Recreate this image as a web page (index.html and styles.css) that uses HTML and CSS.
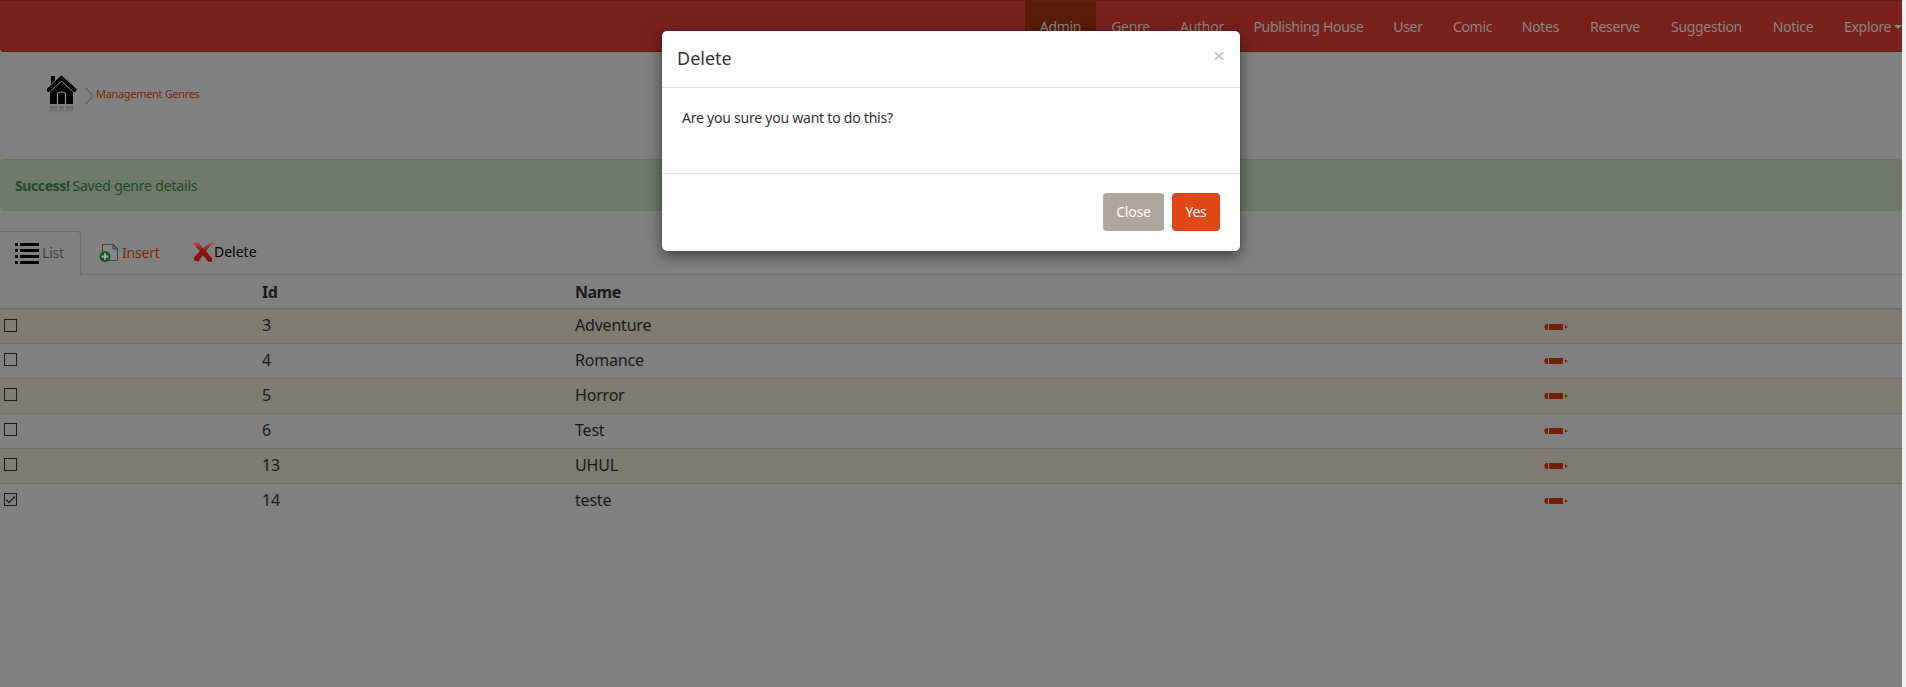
FILE: index.html
```
<!DOCTYPE html>
<html lang="en">
<head>
<meta charset="utf-8">
<title>Management Genres</title>
<link rel="stylesheet" href="styles.css">
</head>
<body>
<div class="page">
  <nav class="navbar">
    <a class="active"><span>Admin</span></a><a><span>Genre</span></a><a><span>Author</span></a><a><span>Publishing House</span></a><a><span>User</span></a><a><span>Comic</span></a><a><span>Notes</span></a><a><span>Reserve</span></a><a><span>Suggestion</span></a><a><span>Notice</span></a><a class="explore"><span>Explore</span><i class="caret"></i></a>
  </nav>
  <div class="breadcrumb">
    <svg class="home" width="30" height="40" viewBox="0 0 30 40">
      <defs><linearGradient id="fade" x1="0" y1="0" x2="0" y2="1"><stop offset="0" stop-color="#666"/><stop offset="1" stop-color="#808080"/></linearGradient></defs>
      <path d="M4 1h4v4L4 9z"/>
      <path d="M1.500 15L14.500 3l13 12" fill="none" stroke="#000" stroke-width="4" stroke-linecap="round"/>
      <path d="M3 16L14.500 6 26 16v13H3z"/>
      <path d="M2.500 17L14.500 6.300l12 10.700" fill="none" stroke="#999" stroke-width=".8"/>
      <path d="M10.500 29V19q0-2 4-2t4 2v10" fill="none" stroke="#999" stroke-width="1.200"/>
      <path d="M3 31h7v8H3zM12 31h5v8h-5zM19 31h7v8h-7z" fill="url(#fade)"/>
    </svg>
    <svg class="chevron" width="9" height="18" viewBox="0 0 9 18"><path d="M.5.500L8 9 .5 17.500" fill="none" stroke="#606060" stroke-width="1.200"/></svg>
    <a>Management Genres</a>
  </div>
  <div class="alert"><strong>Success!</strong><span>Saved genre details</span></div>
  <div class="tabs">
    <div class="tab current">
      <svg width="24" height="21" viewBox="0 0 24 21"><path d="M0 0h3v3H0zM5 0h19v3H5zM0 6h3v3H0zM5 6h19v3H5zM0 12h3v3H0zM5 12h19v3H5zM0 18h3v3H0zM5 18h19v3H5z"/></svg>
      <span>List</span>
    </div>
    <div class="tab insert">
      <svg width="20" height="20" viewBox="0 0 20 20">
        <path d="M3.500 1.500h11l4 4v12h-15z" fill="#858585" stroke="#3d4548"/>
        <path d="M14 1.500v4.500h4.500z" fill="#777" stroke="#343b3e"/>
        <circle cx="6" cy="13.500" r="5.500" fill="#1c5426"/>
        <path d="M6 10.200v6.600M2.700 13.500h6.600" stroke="#aaa" stroke-width="1.800"/>
      </svg>
      <span>Insert</span>
    </div>
    <div class="tab delete">
      <svg width="21" height="20" viewBox="0 0 21 20">
        <defs><linearGradient id="red" x1="0" y1="0" x2="0" y2="1"><stop offset="0" stop-color="#a65048"/><stop offset=".45" stop-color="#881512"/><stop offset="1" stop-color="#850f0c"/></linearGradient></defs>
        <path d="M0 1L5.500 0Q8 4 10.500 6.500 15 1 21 .5 16 4 13 9q3 4 6 7.500L19 20 15 19.500Q12 16 10 13 7 17 5.500 19.500L1 18.500 1 15.500Q4 12 7 9 3 6 0 1z" fill="url(#red)"/>
      </svg>
      <span>Delete</span>
    </div>
  </div>
  <table class="genres">
    <colgroup><col class="c1"><col class="c2"><col class="c3"><col></colgroup>
    <thead><tr><th></th><th><span>Id</span></th><th><span>Name</span></th><th></th></tr></thead>
    <tbody>
      <tr><td><i class="box"></i></td><td>3</td><td>Adventure</td><td><svg class="pencil" width="24" height="6" viewBox="0 0 24 6"><use href="#pen"/></svg></td></tr>
      <tr><td><i class="box"></i></td><td>4</td><td>Romance</td><td><svg class="pencil" width="24" height="6" viewBox="0 0 24 6"><use href="#pen"/></svg></td></tr>
      <tr><td><i class="box"></i></td><td>5</td><td>Horror</td><td><svg class="pencil" width="24" height="6" viewBox="0 0 24 6"><use href="#pen"/></svg></td></tr>
      <tr><td><i class="box"></i></td><td>6</td><td>Test</td><td><svg class="pencil" width="24" height="6" viewBox="0 0 24 6"><use href="#pen"/></svg></td></tr>
      <tr><td><i class="box"></i></td><td>13</td><td>UHUL</td><td><svg class="pencil" width="24" height="6" viewBox="0 0 24 6"><use href="#pen"/></svg></td></tr>
      <tr><td><i class="box"><svg width="11" height="11" viewBox="0 0 11 11"><path d="M1 5.500L4 8.500 10 2.500" fill="none" stroke="#222" stroke-width="1.400"/></svg></i></td><td>14</td><td>teste</td><td><svg class="pencil" width="24" height="6" viewBox="0 0 24 6"><use href="#pen"/></svg></td></tr>
    </tbody>
  </table>
  <svg class="symbols" width="0" height="0"><defs><g id="pen" fill="#742009"><path d="M2 0h2v6H2L.5 4.500v-3zM5 0h14v6H5zM21 1.300L24 3 21 4.700z"/></g></defs></svg>
</div>
<div class="modal">
  <div class="modal-head"><h4>Delete</h4><svg width="10" height="8" viewBox="0 0 10 8"><path d="M1 .5l8 7M9 .5l-8 7" stroke="#c9c7c4" stroke-width="2"/></svg></div>
  <div class="modal-body">Are you sure you want to do this?</div>
  <div class="modal-foot"><button class="close">Close</button><button class="yes">Yes</button></div>
</div>
</body>
</html>
```
FILE: styles.css
```
* { box-sizing: border-box; }
body { margin: 0; height: 687px; overflow: hidden; background: #f0f0f0; font: 14px/20px "Noto Sans", "Open Sans", sans-serif; color: #1a1a1a; }
svg { display: block; flex: none; }
.page { width: 1902px; height: 687px; background: #808080; overflow: hidden; }
.navbar { height: 52px; background: #79211d; border-top: 1px solid #651e0a; border-bottom: 1px solid #651e0a; border-radius: 0 0 0 4px; display: grid; grid-template-columns: 71px 69px 74px 139px 60px 69px 67px 82px 101px 72px 73px; justify-content: end; letter-spacing: -0.3px; color: #8b8581; }
.navbar a { display: flex; align-items: center; justify-content: center; white-space: nowrap; padding-top: 1px; }
.navbar .active { background: #581d09; }
.navbar .explore { justify-content: flex-start; padding-left: 15px; gap: 3px; }
.caret { border: 4px solid transparent; border-top-color: #8b8581; border-bottom: 0; }
.breadcrumb { height: 107px; padding: 23px 0 0 47px; display: flex; align-items: flex-start; color: #792a0c; font-size: 11px; letter-spacing: -0.32px; }
.chevron { margin: 12px 2px 0 8px; }
.breadcrumb a { margin-top: 9px; }
.alert { height: 52px; background: #6f786b; border: 1px solid #6b7862; border-radius: 4px; padding: 16px 14px; display: flex; gap: 3px; color: #234925; letter-spacing: -0.18px; }
.alert strong { letter-spacing: -0.4px; }
.tabs { margin-top: 20px; height: 44px; display: flex; border-bottom: 1px solid #6e7072; }
.tab { height: 43px; display: flex; align-items: center; letter-spacing: -0.2px; }
.current { width: 81px; height: 44px; border: 1px solid #6e7072; border-left: 0; border-bottom: 0; border-radius: 0 4px 0 0; background: #808080; padding: 0 0 1px 15px; gap: 3px; color: #40474a; }
.insert { margin-left: 18px; width: 94px; gap: 3px; color: #792a0c; }
.delete { gap: 0; color: #000; padding-bottom: 2px; letter-spacing: 0; }
.genres { width: 1902px; border-collapse: collapse; table-layout: fixed; font-size: 16px; letter-spacing: -0.2px; }
.c1 { width: 258px; }
.c2 { width: 313px; }
.c3 { width: 967px; }
.genres th { height: 34px; padding: 0 4px; text-align: left; border-bottom: 2px solid #6e7072; letter-spacing: -0.5px; }
.genres td { height: 35px; padding: 0 4px 2px; border-bottom: 1px solid #6e7072; }
.genres tbody tr:first-child td { height: 34px; }
.genres tr:last-child td { border-bottom: 0; }
.genres thead tr:last-child th { border-bottom: 2px solid #6e7072; }
.genres tbody tr:nth-child(odd) { background: #7e7b72; }
.box { display: block; width: 13px; height: 13px; border: 1px solid #1a1a1a; }
.pencil { margin: 3px 0 0 2px; }
.symbols { height: 0; }
.modal { position: absolute; left: 662px; top: 31px; width: 578px; height: 220px; background: #fff; border-radius: 5px; box-shadow: 0 5px 15px rgba(0,0,0,.5), 0 0 1px rgba(0,0,0,.6); color: #333; }
.modal-head { height: 57px; border-bottom: 1px solid #e2e2e2; display: flex; align-items: center; justify-content: space-between; padding: 0 16px 2px 15px; }
.modal-head svg { margin-top: -4px; }
h4 { margin: 0; font-size: 18px; font-weight: 400; letter-spacing: 0; }
.modal-body { height: 86px; padding: 20px; letter-spacing: -0.23px; border-bottom: 1px solid #e2e2e2; }
.modal-foot { display: flex; justify-content: flex-end; gap: 8px; padding: 19px 20px; }
button { height: 38px; border: 0; border-radius: 4px; padding: 0; font: inherit; color: #fff; letter-spacing: -0.2px; }
.close { width: 61px; background: #aea79f; }
.yes { width: 48px; background: #dd4814; }
```
